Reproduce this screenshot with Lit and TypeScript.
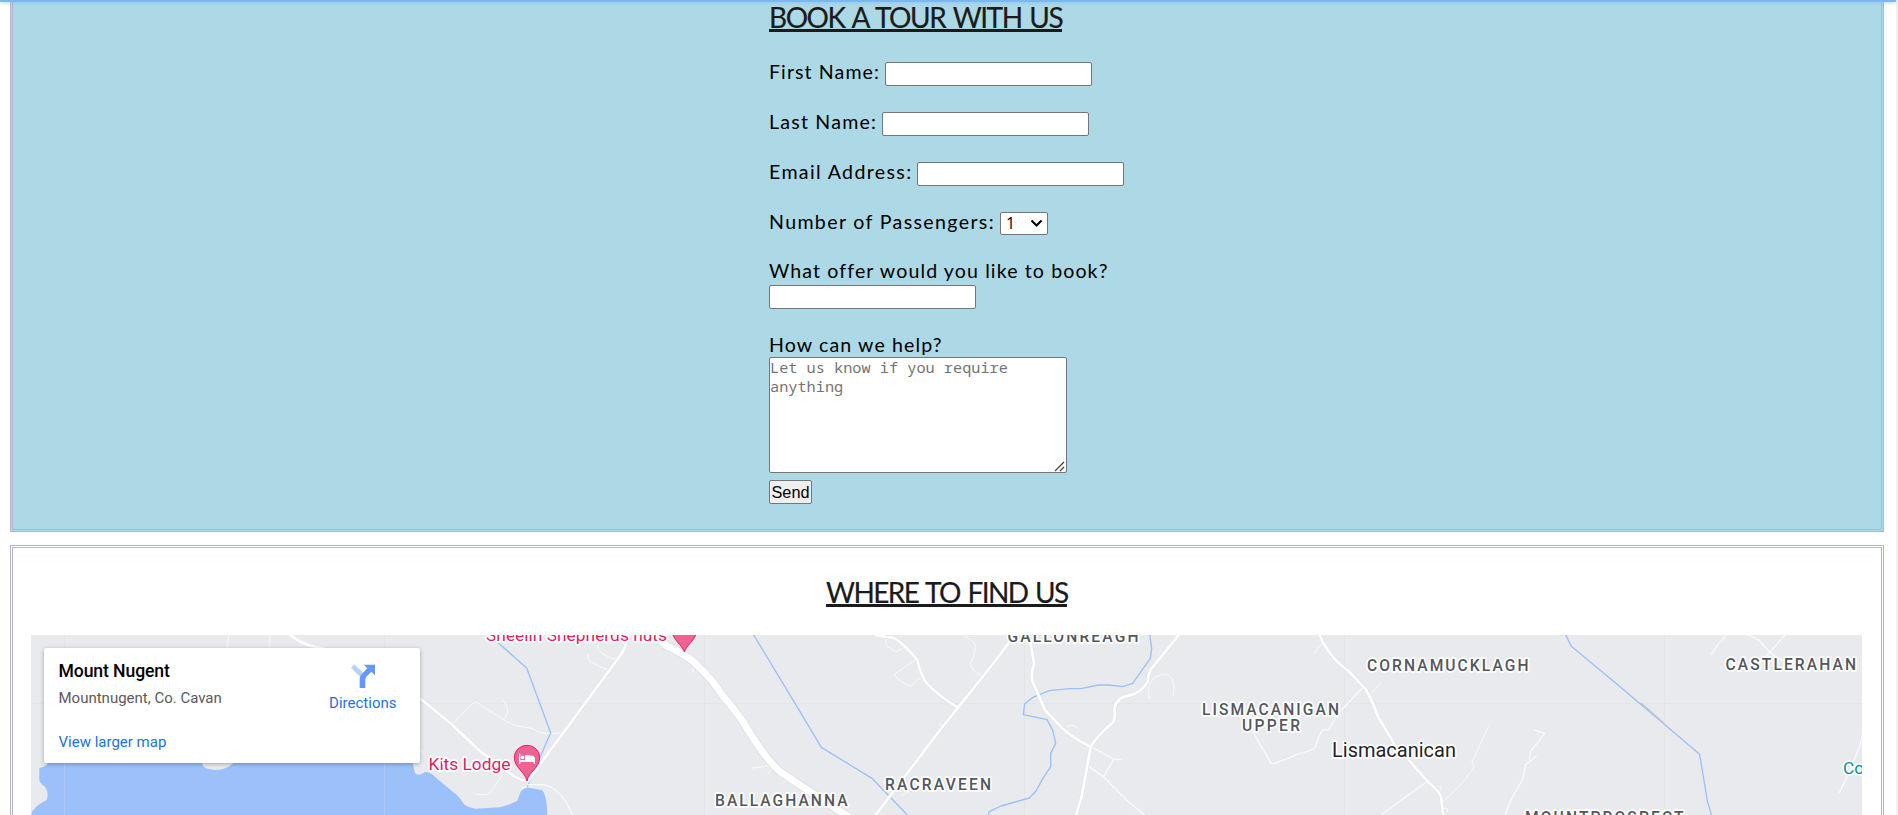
import { LitElement, html, css, svg } from "lit";
import { customElement } from "lit/decorators.js";

type Label = [string, number, number, number, string];

const LABELS: Label[] = [
  ["Sheelin Shepherds huts", 486, 641, 181, "poi"],
  ["Kits Lodge", 428.5, 769.5, 82, "poi"],
  ["BALLAGHANNA", 715, 806.3, 132.5, "area"],
  ["RACRAVEEN", 885, 790.3, 106, "area"],
  ["GALLONREAGH", 1007.5, 641.7, 131, "area"],
  ["CORNAMUCKLAGH", 1367, 671, 161.5, "area"],
  ["LISMACANIGAN", 1202, 714.5, 137, "area"],
  ["UPPER", 1242, 730.7, 58, "area"],
  ["Lismacanican", 1332, 756.5, 124, "town"],
  ["CASTLERAHAN", 1725.5, 669.7, 130.5, "area"],
  ["MOUNTPROSPECT", 1525, 823, 158.5, "area"],
];

@customElement("area-map")
export class AreaMap extends LitElement {
  static styles = css`
    :host { display: block; position: relative; height: 495px; background: #e8eaed; overflow: hidden; font-family: Roboto, sans-serif; }
    svg { display: block; }
    .tile { stroke: #e4e5e5; stroke-width: 1; }
    .tile-water { stroke: #afc7ee; stroke-width: 1; }
    .water { fill: #9cc0f9; }
    .land { fill: #e8eaed; }
    .river, .road, .lane, .main, .casing, .edge { fill: none; stroke-linejoin: round; stroke-linecap: round; }
    .river { stroke: #9cc0f9; stroke-width: 4; }
    .culvert { stroke: #c2c4c8; stroke-width: 4; }
    .casing { stroke: #dcdee1; stroke-width: 26; }
    .main { stroke: #fff; stroke-width: 21; }
    .edge { stroke: #dfe1e4; stroke-width: 11; }
    .road { stroke: #fff; stroke-width: 8; }
    .lane { stroke: #f8f9fa; stroke-width: 3; }
    .wide { stroke-width: 4; }
    text { paint-order: stroke; stroke: #fff; stroke-width: 3.5px; stroke-linejoin: round; }
    .area { font-size: 15.6px; font-weight: 500; fill: #54575b; }
    .town { font-size: 20px; fill: #232427; }
    .poi { font-size: 17.4px; fill: #e1215f; }
    .park { font-size: 17.4px; fill: #128b93; }
    .card {
      position: absolute; left: 13px; top: 13px; width: 376px; height: 115px; box-sizing: border-box;
      background: #fff; border-radius: 2px; box-shadow: 0 1px 4px rgba(0, 0, 0, 0.3);
      display: flex; justify-content: space-between; padding: 13px 23.5px 0 14.5px;
    }
    .title { font-size: 17.6px; line-height: 21px; font-weight: 500; color: #000; letter-spacing: -0.1px; }
    .sub { font-size: 15px; line-height: 18px; color: #5b5b5b; margin-top: 7px; }
    .link { font-size: 15px; line-height: 18px; color: #1a73e8; }
    .larger { margin-top: 26px; }
    .dir { display: flex; flex-direction: column; align-items: center; padding-top: 4px; gap: 5px; }
    .dir svg { position: relative; top: -1px; }
  `;

  render() {
    return html`
      <svg width="1831" height="495" viewBox="31 635 1831 495">
        ${[64.5, 384.5, 704.5, 1024.5, 1344.5, 1664.5].map((x) => svg`<path class="tile" d="M${x} 635V1130"/>`)}
        <path class="tile" d="M31 703.5H1862" />
        <g transform="translate(0 520) scale(.33333)">
          <path class="water" d="M144 700V729Q142 738 118 744V780Q122 793 135 800Q148 820 140 840Q98 860 93 885V1800H1642V885Q1640 820 1625 810L1585 803Q1572 803 1562 815L1552 842L1530 853L1500 862L1428 866Q1400 863 1390 850Q1375 825 1360 817L1295 762Q1280 752 1270 759L1258 764Q1245 764 1244 755L1238 728V700Z" />
          <path class="land" d="M600 700H710L700 729Q680 750 645 750Q610 747 608 735Z" />
          <path class="lane" d="M686 345L682 385M810 345L809 385" />
          <path class="road" d="M870 345Q920 382 970 385" />
        </g>
        <path class="tile-water" d="M64.5 763V1130M384.5 763V1130" />
        <g transform="translate(400 620) scale(.33333)">
          <path class="lane" d="M157 312L218 250Q228 243 240 253L300 292Q340 318 360 320Q400 322 415 336Q445 344 485 338M308 240Q335 265 314 295M595 75Q590 88 600 95Q635 120 650 117M563 103Q564 122 575 127L627 152M880 130V158M1056 444L1095 440L1115 425M1098 435L1118 445L1104 462M55 385L70 398M227 522Q262 530 275 513L308 462M365 505L388 495" />
          <path class="river" d="M285 60L380 144L452 338L382 500M1052 30L1200 275L1264 382L1416 475L1522 585" />
          <path class="edge" d="M63 238L154 312L245 398L300 435Q345 478 382 485L627 152L662 105Q680 80 682 45" />
          <path class="road" d="M63 238L154 312L245 398L300 435Q345 478 382 485L627 152L662 105Q680 80 682 45" />
          <path class="lane wide" d="M384 494H430Q480 500 518 585" />
          <path class="casing" d="M740 30L800 78Q875 112 895 140Q935 175 970 230Q1005 270 1030 307Q1110 440 1155 465L1215 505L1345 590" />
          <path class="main" d="M740 30L800 78Q875 112 895 140Q935 175 970 230Q1005 270 1030 307Q1110 440 1155 465L1215 505L1345 590" />
        </g>
        <g transform="translate(780 540) scale(.33333)">
          <path class="lane" d="M320 292Q310 318 330 325L348 336L368 325M410 357L342 403Q358 425 393 440L427 405M555 290Q595 307 585 330Q582 350 572 367Q570 390 602 406M482 550V570M860 560Q875 550 893 563M1108 478Q1100 435 1118 418Q1140 400 1165 405Q1188 418 1180 467M366 767L385 755" />
          <path class="river" d="M1108 275L1115 325L1111 355L1058 430L1028 440L985 435H955L903 446L868 446L808 452L757 473L734 492L730 524L801 539L818 571L827 610L812 640V680L792 710L768 753L748 774L663 798L628 815L622 835" />
          <path class="lane wide" d="M932 620L1002 658L970 710L922 677M1002 658H1024M970 710L1045 785L1100 830" />
          <path class="edge" d="M285 285L345 295Q375 315 412 360Q420 400 440 430Q480 470 534 503M700 290L648 360L534 503L480 570L287 825M750 300L762 370Q750 410 760 430L795 510L850 568Q895 605 932 620L905 770L885 835M1200 280L1115 385Q1105 400 1103 425Q1080 460 1050 466Q1010 470 1003 505Q1010 545 990 555Q955 585 932 620" />
          <path class="road" d="M285 285L345 295Q375 315 412 360Q420 400 440 430Q480 470 534 503M700 290L648 360L534 503L480 570L287 825M750 300L762 370Q750 410 760 430L795 510L850 568Q895 605 932 620L905 770L885 835M1200 280L1115 385Q1105 400 1103 425Q1080 460 1050 466Q1010 470 1003 505Q1010 545 990 555Q955 585 932 620" />
        </g>
        <g transform="translate(1160 620) scale(.33333)">
          <path class="lane" d="M488 67L462 101M630 223L662 190M985 320L935 428L943 438L915 480L850 545M848 565H862V575M835 500Q848 490 842 510" />
          <path class="lane wide" d="M608 203L530 285Q515 315 506 330H487Q475 350 466 382Q450 395 420 400L345 430L333 431L313 394Q285 350 280 335M800 485L663 585M1123 330L1155 340L1115 390Q1105 410 1110 425L1128 407M1110 425L1097 433L1088 478L1055 535L1035 585" />
          <path class="edge" d="M475 35L488 67Q515 110 535 128L565 153L615 205Q630 225 655 292L690 350Q710 390 740 413L803 485Q840 515 843 530L850 590" />
          <path class="road" d="M475 35L488 67Q515 110 535 128L565 153L615 205Q630 225 655 292L690 350Q710 390 740 413L803 485Q840 515 843 530L850 590" />
        </g>
        <g transform="translate(1518 620) scale(.33333)">
          <path class="lane wide" d="M630 40L600 73L580 103M685 43Q720 55 730 67Q745 90 770 108L797 122M803 43L725 130M1034 340L1025 380L985 475L964 518" />
          <path class="river" d="M140 38L160 79L300 195L545 403L568 543L582 590" />
          <path class="culvert" d="M369 249L438 310" />
        </g>
        <g transform="translate(400 620) scale(.33333)" fill="#f06292" stroke="#e91e63" stroke-width="3">
          <path d="M381 483C376 455 343 445 343 412A38 36 0 0 1 419 412C419 445 386 455 381 483Z" />
          <path d="M853 96C848 75 815 60 815 25A38 36 0 0 1 891 25C891 60 858 75 853 96Z" />
          <path fill="#fff" stroke="none" d="M357 401h4v20h14v-15q10-2 17 1q10-3 13 8v17h-4v-6h-40v6h-4Z" />
          <circle cx="368" cy="412" r="5.5" fill="#fff" stroke="none" />
        </g>
        ${LABELS.map(([t, x, y, w, c]) => svg`<text class=${c} x=${x} y=${y} textLength=${w}>${t}</text>`)}
        <text class="park" x="1843" y="773.8">Co</text>
      </svg>
      <div class="card">
        <div>
          <div class="title">Mount Nugent</div>
          <div class="sub">Mountnugent, Co. Cavan</div>
          <div class="link larger">View larger map</div>
        </div>
        <div class="dir">
          <svg width="24" height="24" viewBox="0 0 72 72">
            <path fill="#b8d0fc" d="M0 11L10 1L42 32L32 43Z" />
            <path fill="#6698fa" d="M38 2H72V34L61 23L46 38Q43 42 43 49V72H26V47Q26 37 32 31L49 13Z" />
          </svg>
          <div class="link">Directions</div>
        </div>
      </div>
    `;
  }
}

@customElement("app-root")
export class AppRoot extends LitElement {
  static styles = css`
    :host { display: block; height: 815px; overflow: hidden; background: #fff; font-family: Lato, sans-serif; color: #000; position: relative; }
    .topbar { position: absolute; left: 0; top: 0; width: 1896px; height: 2px; background: #7cb8ee; box-shadow: 0 0 4px #7ab8f5; }
    .page { box-sizing: border-box; height: 815px; padding: 0 12px 0 10px; border-right: 2px solid #f1f1f1; display: flex; flex-direction: column; gap: 13px; overflow: hidden; }
    section { box-sizing: border-box; border: 1px solid #b2b6d4; flex: none; }
    .book { height: 535px; margin-top: -3px; background: #add8e6; padding: 2px 0 0 758px; box-shadow: inset 0 0 0 1px #add8e6, inset 0 0 0 2px #b2b6d4; }
    .find { height: 600px; padding: 2px 21px 0 20px; box-shadow: inset 0 0 0 1px #fff, inset 0 0 0 2px #b2b6d4; }
    h2 { margin: 0; font-size: 28px; font-weight: 400; color: #1b1b1b; white-space: nowrap; box-sizing: border-box; -webkit-text-stroke: 0.2px #1b1b1b; word-spacing: 2px; }
    h2 span { display: block; box-sizing: border-box; border-bottom: 3px solid #1b1b1b; line-height: 34px; height: 32px; }
    .book h2 { height: 49px; }
    .book h2 span { letter-spacing: -1.45px; width: 293px; }
    .find h2 { height: 87px; padding: 27px 0 0 795px; }
    .find h2 span { letter-spacing: -1.6px; width: 241px; }
    .row { height: 50px; display: flex; align-items: flex-start; }
    label { display: block; font-size: 19.6px; line-height: 25px; height: 25px; padding-top: 10px; padding-bottom: 1px; white-space: nowrap; letter-spacing: 1.1px; }
    .first { width: 116px; letter-spacing: 1.08px; }
    .last { width: 113px; letter-spacing: 1.2px; }
    .email { width: 148px; letter-spacing: 1.35px; }
    .number { width: 231px; letter-spacing: 1.35px; }
    input, select, textarea, button { box-sizing: border-box; margin: 0; border: 1px solid #767676; border-radius: 2px; background: #fff; }
    input { display: block; width: 207px; height: 24px; padding: 0; }
    .row input { margin-top: 13px; }
    .pick { display: grid; margin-top: 13px; width: 48px; height: 23px; }
    .pick > * { grid-area: 1 / 1; }
    select { appearance: none; width: 48px; height: 23px; font: 16px/19px "Open Sans", sans-serif; padding: 0 0 1px 5px; color: #000; }
    .pick svg { justify-self: end; align-self: center; margin-right: 5px; pointer-events: none; }
    .stack label { padding-top: 9px; }
    .stack input { margin-top: 1px; }
    .help label { padding-top: 23px; padding-bottom: 0; }
    .note { display: grid; width: 298px; height: 116px; }
    .note > * { grid-area: 1 / 1; }
    textarea { display: block; resize: none; width: 298px; height: 116px; padding: 0; font: 15.25px/19px "Noto Sans Mono", "DejaVu Sans Mono", monospace; }
    textarea::placeholder { color: #757575; }
    .note svg { justify-self: end; align-self: end; margin: 0 2px 1px 0; pointer-events: none; }
    button { display: block; margin-top: 7px; width: 43px; height: 24px; padding: 0; font: 16.3px "Liberation Sans", sans-serif; background: #efefef; color: #000; }
  `;

  render() {
    return html`
      <div class="page">
        <section class="book">
          <h2><span>BOOK A TOUR WITH US</span></h2>
          <div class="row"><label class="first">First Name:</label><input /></div>
          <div class="row"><label class="last">Last Name:</label><input /></div>
          <div class="row"><label class="email">Email Address:</label><input /></div>
          <div class="row">
            <label class="number">Number of Passengers:</label>
            <div class="pick">
              <select><option>1</option></select>
              <svg width="13" height="9" viewBox="0 0 13 9"><path d="M1.5 1.5L6.5 6.5L11.5 1.5" fill="none" stroke="#000" stroke-width="2" /></svg>
            </div>
          </div>
          <div class="stack"><label>What offer would you like to book?</label><input /></div>
          <div class="help">
            <label>How can we help?</label>
            <div class="note">
              <textarea placeholder="Let us know if you require anything"></textarea>
              <svg width="11" height="11" viewBox="0 0 11 11"><path d="M1 10L10 1M6 10L10 6" fill="none" stroke="#444" stroke-width="1.3" /></svg>
            </div>
          </div>
          <button>Send</button>
        </section>
        <section class="find">
          <h2><span>WHERE TO FIND US</span></h2>
          <area-map></area-map>
        </section>
      </div>
      <div class="topbar"></div>
    `;
  }
}
